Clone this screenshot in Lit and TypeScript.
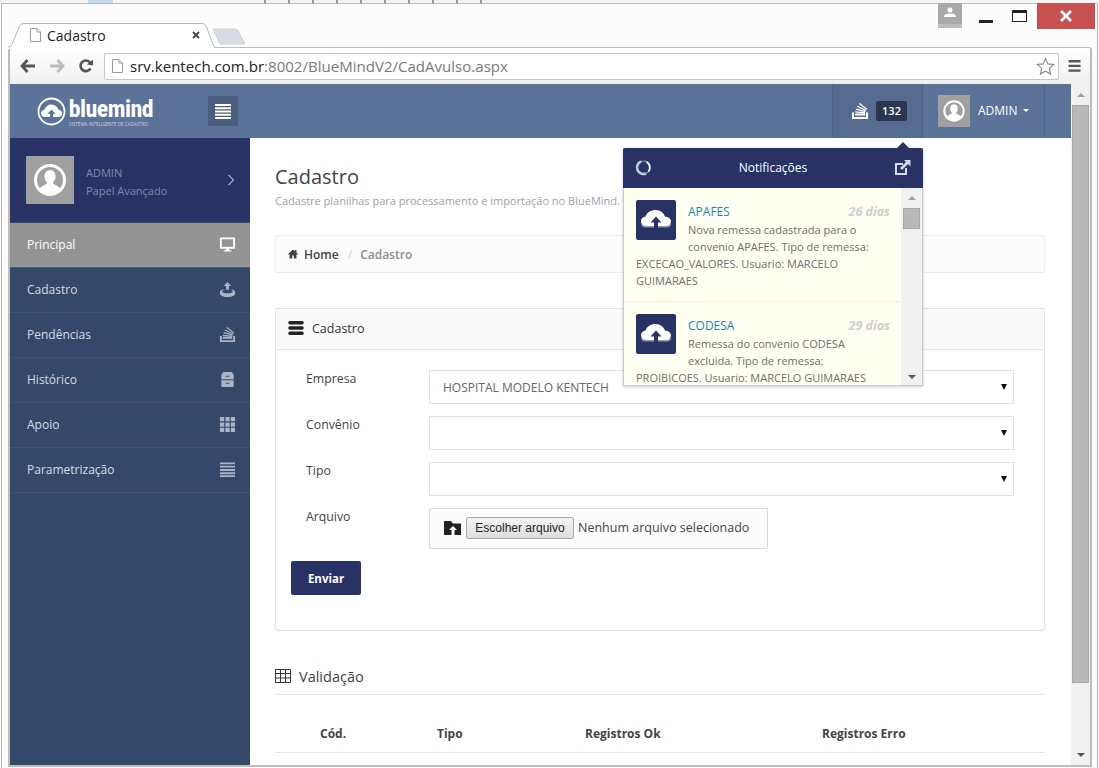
import { LitElement, html, css, svg } from "lit";
import { customElement } from "lit/decorators.js";

const avatar = (cls: string) => html`<svg class=${cls} viewBox="0 0 48 48"><rect width="48" height="48" fill="#a0a0a0"/><circle cx="24" cy="24" r="14.500" fill="none" stroke="#fff" stroke-width="3"/><ellipse cx="24" cy="20.500" rx="5.600" ry="6.600" fill="#fff"/><path d="M13 33.500C15 29.500 20.500 29.500 21.500 26h5c1 3.500 6.500 3.500 8.500 7.500A14 14 0 0 1 13 33.500z" fill="#fff"/></svg>`;

const stackIco = (cls: string) => html`<svg class=${cls} viewBox="0 0 18 18"><path d="M1 10.500h2v4.500h12v-4.500h2V17H1z" fill="currentColor"/><path d="M4 11.500h10v2H4zM4.300 9.300l9.800 .9-.2 1.300-9.800-.9zM5.200 6.400l9.400 2.600-.4 1.300-9.400-2.600zM6.600 3.600l8.600 4.300-.6 1.200-8.600-4.300zM8.700 1l7.500 5.800-.8 1-7.500-5.800z" fill="currentColor"/></svg>`;

const cloud = () => html`<svg class="cloud" viewBox="0 0 40 40"><rect width="40" height="40" rx="2" fill="#293265"/><path d="M9 27.500h22c3 0 4.500-2 4-4-1 1.500-3 2-4.500 2h-21c-1.500 0-3.500-.5-4.500-2 0 2 1.500 4 4 4z" fill="#8f95b3"/><path d="M10 26c-3 0-5-2-5-4.700 0-2.500 2-4.500 4.600-4.700C10.600 12.500 15 10 19.500 10c4.600 0 8.300 2.800 9.500 6.700 3.400 0 6 2 6 4.700 0 2.700-2 4.600-5 4.600z" fill="#fff"/><path d="M20 16.500l-5.500 6h3.500v6.500h4v-6.500h3.500z" fill="#293265"/></svg>`;

const navItems = [
  ["Cadastro", svg`<path d="M9 1l4 4.200h-2.500v4h-3v-4H5zM1 10.500l3.500-1.800v1.600L3 11c1 1.300 3.500 2 6 2s5-.7 6-2l-1.500-.7V8.700L17 10.500V14c-1 1.800-4.500 3-8 3s-7-1.200-8-3z" fill="currentColor"/>`],
  ["Pendências", null],
  ["Histórico", svg`<path d="M4.500 1h9L15.500 4v12.500l-1 .5h-11l-1-.5V4z" fill="currentColor"/><rect x="2.500" y="8.800" width="13" height="1" fill="#34496a"/><rect x="7" y="5" width="4" height="1" fill="#34496a"/><rect x="7" y="12.500" width="4" height="1" fill="#34496a"/>`],
  ["Apoio", svg`<path d="M1 1h4.500v4.500H1zM6.800 1h4.500v4.500H6.800zM12.500 1H17v4.500h-4.500zM1 6.800h4.500v4.500H1zM6.800 6.800h4.500v4.500H6.800zM12.500 6.800H17v4.500h-4.500zM1 12.500h4.500V17H1zM6.800 12.500h4.500V17H6.800zM12.500 12.500H17V17h-4.500z" fill="currentColor"/>`],
  ["Parametrização", svg`<path d="M1 1.500h16v2H1zM1 5h16v2H1zM1 8.500h16v2H1zM1 12h16v2H1zM1 15h16v2H1z" fill="currentColor"/>`],
];

@customElement("notif-item")
class NotifItem extends LitElement {
  static properties = { name: {}, age: {}, text: {} };
  name = "";
  age = "";
  text = "";
  static styles = css`
    :host { display: block; padding: 12px 11px 0 12px; height: 114px; border-bottom: 1px solid #eeeee4; overflow: hidden; font: 11px/17px "Open Sans", sans-serif; color: #6e6e6e; }
    .cloud { float: left; width: 40px; height: 40px; margin-right: 12px; }
    .head { display: flex; justify-content: space-between; height: 19px; padding-top: 2px; align-items: center; }
    .name { color: #2488a3; font-size: 12px; }
    .age { color: #cfcfcf; font-size: 12.5px; font-weight: 700; font-style: italic; }
    p { margin: 0; }
  `;
  render() {
    return html`${cloud()}<div class="head"><span class="name">${this.name}</span><span class="age">${this.age}</span></div><p>${this.text}</p>`;
  }
}

@customElement("app-root")
class AppRoot extends LitElement {
  static styles = css`
    :host { display: block; width: 1099px; height: 768px; overflow: hidden; background: #fff; font-family: "Open Sans", sans-serif; }
    * { box-sizing: border-box; }
    .strip { height: 3px; background: #f6f6f6; display: flex; padding-left: 88px; }
    .blue { width: 25px; background: #c5d9ef; }
    .ticks { width: 226px; margin-left: 151px; background: repeating-linear-gradient(90deg, #999 0 2px, transparent 2px 24px); }
    .win { margin-left: 1px; width: 1097px; height: 765px; border: 1px solid #b9b9b9; border-bottom: 0; background: #fcfcfc; display: flex; flex-direction: column; padding: 0 5px 0 6px; }

    .title { height: 43px; position: relative; flex: none; display: flex; z-index: 1; }
    .tabshape { position: absolute; left: 0; top: 0; width: 240px; height: 45px; }
    .tab { position: relative; margin: 19px 0 0 22px; width: 170px; height: 24px; display: flex; align-items: center; font: 14px "Open Sans", sans-serif; color: #222; }
    .doc { width: 11px; height: 14px; flex: none; }
    .tabtext { margin-left: 6px; flex: 1; }
    .x { width: 8px; height: 8px; }
    .ctrls { position: absolute; right: -3px; top: -1px; display: flex; align-items: flex-start; }
    .profile { width: 24px; height: 25px; background: #a9a9a9; border-bottom: 4px solid #bdbdbd; display: flex; justify-content: center; padding-top: 4px; }
    .profile svg { width: 12px; height: 11px; }
    .min { width: 14px; height: 3px; background: #222; margin: 17px 19px 0 17px; }
    .max { width: 15px; height: 12px; border: 1.5px solid #222; border-top-width: 3px; margin: 7px 10px 0 0; }
    .close { width: 58px; height: 26px; background: #c75050; display: flex; align-items: center; justify-content: center; }
    .close svg { width: 12px; height: 12px; }

    .tools { height: 37px; flex: none; display: flex; align-items: center; border: 1px solid #bdbdbd; border-width: 1px 2px 0; border-radius: 3px 3px 0 0; background: linear-gradient(#fff, #efefef); padding: 0 8px 0 10px; }
    .nav { width: 16px; height: 14px; flex: none; margin-right: 13px; }
    .rel { margin-right: 10px; }
    .url { flex: 1; height: 27px; margin: 0 9px 0 0; background: #fff; border: 1px solid #c6c6c6; border-radius: 2px; display: flex; align-items: center; padding: 0 3px 1px 7px; font: 15.05px "Open Sans", sans-serif; color: #7a7a7a; }
    .url .doc { margin-right: 7px; }
    .url b { font-weight: 400; color: #222; }
    .url span { flex: 1; }
    .star { width: 19px; height: 18px; }
    .menu { width: 13px; height: 12px; flex: none; margin-right: 1px; }

    .body { height: 681px; display: flex; border: 2px solid #bdbdbd; border-top: 0; border-bottom: 0; background: #fff; flex: none; }
    .foot { height: 2px; background: #bdbdbd; flex: none; }
    .page { width: 1061px; display: flex; flex-direction: column; position: relative; }
    .top { height: 54px; background: #5b7299; display: flex; align-items: stretch; flex: none; }
    .logo { width: 198px; display: flex; align-items: center; padding-left: 27px; gap: 3px; color: #fff; }
    .logo svg { width: 29px; height: 29px; }
    .brand { display: flex; flex-direction: column; padding-top: 3px; }
    .bname { font: 900 23px/21px "Roboto", sans-serif; display: block; transform: scaleX(.87); transform-origin: left; width: 84px; }
    .bsub { font-size: 4.600px; line-height: 6px; color: #c9d2e0; white-space: nowrap; margin-top: 1px; }
    .burger { width: 30px; height: 30px; background: #4a5e80; margin-top: 12px; display: flex; align-items: center; justify-content: center; }
    .burger svg { width: 16px; height: 15px; }
    .spacer { flex: 1; }
    .cell-n { width: 91px; border-left: 1px solid #4e638a; border-right: 1px solid #4e638a; background: #566b90; display: flex; align-items: center; padding: 0 0 1px 18px; gap: 7px; color: #fff; }
    .top-stack { width: 18px; height: 18px; }
    .badge { width: 31px; height: 20px; background: #2a3650; border-radius: 2px; color: #fff; font-size: 11px; font-weight: 600; display: flex; align-items: center; justify-content: center; }
    .cell-u { width: 122px; border-right: 1px solid #4e638a; display: flex; align-items: center; padding: 0 0 1px 15px; color: #fff; font-size: 12px; }
    .top-av { width: 32px; height: 32px; margin-right: 8px; }
    .caret { width: 0; height: 0; border: 3px solid transparent; border-top-color: #fff; border-bottom: 0; margin-left: 6px; }
    .end { width: 26px; }

    .row { flex: 1; display: flex; min-height: 0; }
    aside { width: 240px; background: #34496a; flex: none; color: #d5dbe6; font-size: 12px; }
    .who { height: 85px; background: #293265; display: flex; align-items: center; padding: 0 15px 0 16px; border-bottom: 1px solid #3d4a63; color: #8189a8; line-height: 18px; font-size: 11px; }
    .side-av { width: 48px; height: 48px; margin-right: 12px; flex: none; }
    .who div { flex: 1; padding-top: 3px; }
    .chev { width: 8px; height: 12px; color: #fff; }
    .it { height: 45px; display: flex; align-items: center; justify-content: space-between; padding: 0 14px 2px 17px; border-bottom: 1px solid #43536e; color: #d5dbe6; }
    .it svg { width: 17px; height: 17px; color: #a9b4c6; }
    .it.on { background: #939393; color: #fff; border-bottom-color: #4a5a72; }
    .it.on svg { color: #fff; }

    main { flex: 1; padding: 0 26px 0 25px; min-width: 0; overflow: hidden; color: #333; }
    h1 { margin: 27px 0 0; font: 400 20px/24px "Open Sans", sans-serif; color: #444; }
    .sub { font-size: 11px; color: #9aa4ab; line-height: 16px; margin-top: 4px; }
    .crumb { margin-top: 26px; height: 38px; border: 1px solid #ececec; border-radius: 2px; background: #fcfcfc; display: flex; align-items: center; padding-left: 12px; font-size: 12px; font-weight: 600; color: #444; }
    .crumb svg { width: 10px; height: 10px; margin-right: 6px; }
    .crumb i { font-style: normal; font-weight: 400; color: #ccc; margin: 0 8px 0 9px; }
    .crumb em { font-style: normal; color: #8d8d8d; }
    .card { margin-top: 35px; height: 323px; border: 1px solid #e2e2e2; border-radius: 2px; }
    .card-h { height: 41px; background: #fafafa; border-bottom: 1px solid #e2e2e2; display: flex; align-items: center; padding: 0 0 2px 12px; font-size: 12.5px; font-weight: 400; color: #333; }
    .card-h svg { width: 16px; height: 16px; margin-right: 8px; }
    .form { padding: 20px 30px 0 30px; display: grid; grid-template-columns: 123px 585px; row-gap: 12px; font-size: 12.3px; color: #444; }
    .lab { padding-top: 1px; line-height: 16px; font-weight: 400; }
    .sel { height: 34px; border: 1px solid #e2e2e2; display: flex; align-items: center; padding: 0 6px 0 13px; font-size: 12px; color: #666; }
    .sel::after { content: ""; margin-left: auto; border: 3.5px solid transparent; border-top: 6px solid #111; border-bottom: 0; }
    .file { width: 339px; height: 41px; border: 1px solid #d8d8d8; border-radius: 2px; background: #fcfcfc; display: flex; align-items: center; padding: 0 0 2px 14px; font: 12.5px "Open Sans", sans-serif; color: #444; }
    .file svg { width: 17px; height: 14px; margin-right: 5px; }
    .pick { font: 12px "Liberation Sans", sans-serif; height: 22px; width: 108px; border: 1px solid #a9a9a9; border-radius: 2px; background: linear-gradient(#f4f4f4, #dedede); color: #222; margin-right: 4px; padding: 0; }
    .send { display: block; margin: 12px 0 0 15px; width: 70px; height: 34px; background: #293265; color: #fff; border: 0; border-radius: 2px; font: 700 11.500px "Open Sans", sans-serif; padding: 0; }
    .val { margin-top: 34px; height: 30px; border-bottom: 1px solid #e6e6e6; display: flex; align-items: center; padding-bottom: 7px; font-size: 14.5px; color: #444; }
    .val svg { width: 16px; height: 14px; margin-right: 8px; }
    .thead { margin-top: 29px; height: 29px; border-bottom: 1px solid #e6e6e6; display: grid; grid-template-columns: 117px 148px 237px 1fr; padding-left: 45px; font-size: 12px; font-weight: 700; color: #444; line-height: 20px; }

    .scroll { width: 19px; flex: none; background: #f1f1f1; display: flex; flex-direction: column; align-items: center; }
    .arr { height: 21px; flex: none; display: flex; align-items: center; justify-content: center; }
    .arr::after { content: ""; border: 4px solid transparent; border-top: 0; border-bottom: 4px solid #555; }
    .arr.up::after { border-bottom-color: #a3a3a3; }
    .arr.dn::after { border-bottom: 0; border-top: 4px solid #555; }
    .thumb { width: 17px; height: 578px; background: #b8b8b8; border: 1px solid #a8a8a8; flex: none; }
    .gap { flex: 1; }

    .pop { position: absolute; left: 613px; top: 64px; width: 300px; height: 238px; background: #fffff2; border: 1px solid #c9c9c9; box-shadow: 0 1px 3px rgba(0,0,0,.2); border-top: 0; display: flex; flex-direction: column; }
    .pop::before { content: ""; position: absolute; right: 13px; top: -6px; border: 6px solid transparent; border-top: 0; border-bottom: 6px solid #2a3650; }
    .pop-h { margin: 0 -1px; height: 40px; flex: none; background: #293265; color: #fff; border-radius: 2px 2px 0 0; display: flex; align-items: center; padding: 0 12px 1px; font-size: 12px; font-weight: 400; justify-content: space-between; }
    .pop-h svg { width: 17px; height: 17px; }
    .pop-b { flex: 1; display: flex; min-height: 0; }
    .list { flex: 1; overflow: hidden; min-width: 0; }
    .bar { width: 21px; background: #f1f1f1; flex: none; display: flex; flex-direction: column; align-items: center; }
    .bar .arr { height: 20px; }
    .bar .thumb { height: 21px; width: 17px; }
    .bar .arr.dn { height: 17px; }
  `;

  render() {
    const doc = html`<svg class="doc" viewBox="0 0 11 14"><path d="M.5.5h6.500l3.500 3.500v9.500h-10z" fill="#fff" stroke="#9a9a9a"/><path d="M7 .5V4h3.500" fill="#eee" stroke="#9a9a9a"/></svg>`;
    return html`
      <div class="strip"><div class="blue"></div><div class="ticks"></div></div>
      <div class="win">
        <div class="title">
          <svg class="tabshape" viewBox="0 0 240 45">
            <path d="M205 25H226C229 25 230 26 231 29L237 40H212z" fill="#d8dde4" stroke="#ccd0d6"/>
            <path d="M0 45V43C3 43 4 41 5 38L11 23C12 20.500 14 19.500 17 19.500H194C196.500 19.500 197.500 21 198.500 23L206 43V45z" fill="#fff"/>
            <path d="M0 43C3 43 4 41 5 38L11 23C12 20.500 14 19.500 17 19.500H194C196.500 19.500 197.500 21 198.500 23L206 43" fill="none" stroke="#b5b5b5"/>
          </svg>
          <div class="tab">${doc}<span class="tabtext">Cadastro</span>
            <svg class="x" viewBox="0 0 8 8"><path d="M1 1l6 6M7 1l-6 6" stroke="#444" stroke-width="1.800"/></svg>
          </div>
          <div class="ctrls">
            <div class="profile"><svg viewBox="0 0 12 11"><circle cx="6" cy="3" r="2.500" fill="#fff"/><path d="M0 10c0-3 3-3.500 6-3.500s6 .5 6 3.500z" fill="#fff"/></svg></div>
            <div class="min"></div>
            <div class="max"></div>
            <div class="close"><svg viewBox="0 0 12 12"><path d="M1 1l10 10M11 1L1 11" stroke="#fff" stroke-width="2.800"/></svg></div>
          </div>
        </div>
        <div class="tools">
          <svg class="nav" viewBox="0 0 16 14"><path d="M7.500 1L2 7l5.500 6M2.500 7H15" fill="none" stroke="#555" stroke-width="2.800"/></svg>
          <svg class="nav" viewBox="0 0 16 14"><path d="M8.500 1L14 7l-5.500 6M13.500 7H1" fill="none" stroke="#bbb" stroke-width="2.800"/></svg>
          <svg class="nav rel" viewBox="0 0 16 14"><path d="M12.500 9.500A5.300 5.300 0 1 1 12 3.500" fill="none" stroke="#555" stroke-width="2.600"/><path d="M9 5.500L15 .5v6z" fill="#555"/></svg>
          <div class="url">${doc}<span><b>srv.kentech.com.br</b>:8002/BlueMindV2/CadAvulso.aspx</span>
            <svg class="star" viewBox="0 0 19 18"><path d="M9.500 1.500l2.400 5.400 5.800.6-4.300 3.900 1.200 5.700-5.100-2.900-5.100 2.900 1.200-5.700L1.300 7.500l5.800-.6z" fill="#fff" stroke="#888" stroke-width="1.100"/></svg>
          </div>
          <svg class="menu" viewBox="0 0 13 12"><path d="M.5 0h12v2.400H.5zM.5 4.700h12v2.400H.5zM.5 9.400h12v2.400H.5z" fill="#555"/></svg>
        </div>
        <div class="body">
          <div class="page">
            <header class="top">
              <div class="logo">
                <svg viewBox="0 0 29 29"><circle cx="14.500" cy="14.500" r="13" fill="none" stroke="#fff" stroke-width="1.800"/><path d="M8 20c-2.300 0-4-1.500-4-3.600 0-2 1.500-3.400 3.600-3.600C8.400 9.500 11.300 7.500 14.500 7.500c3.300 0 6 2.100 6.900 5.200 2.300.1 3.800 1.700 3.800 3.700 0 2.100-1.700 3.600-4 3.600z" fill="#fff"/><path d="M14.500 12.500l-4 4.300h2.500v5.500h3v-5.500h2.500z" fill="#5b7299"/></svg>
                <div class="brand"><span class="bname">bluemind</span><span class="bsub">SISTEMA INTELIGENTE DE CADASTRO</span></div>
              </div>
              <div class="burger"><svg viewBox="0 0 16 15"><path d="M0 0h16v2H0zM0 3.250h16v2H0zM0 6.500h16v2H0zM0 9.750h16v2H0zM0 13h16v2H0z" fill="#fff"/></svg></div>
              <div class="spacer"></div>
              <div class="cell-n">${stackIco("top-stack")}<span class="badge">132</span></div>
              <div class="cell-u">${avatar("top-av")}ADMIN<span class="caret"></span></div>
              <div class="end"></div>
            </header>
            <div class="row">
              <aside>
                <div class="who">${avatar("side-av")}<div>ADMIN<br />Papel Avançado</div>
                  <svg class="chev" viewBox="0 0 8 12"><path d="M1.500 1l5 5-5 5" fill="none" stroke="currentColor"/></svg>
                </div>
                <div class="it on">Principal<svg viewBox="0 0 18 18"><path d="M1 1.500h16v12H1zM3 3.500v8h12v-8zM7.500 13.500h3v1.500h2.500v1.500H5V15h2.500z" fill="currentColor" fill-rule="evenodd"/></svg></div>
                ${navItems.map(([n, ic]) => html`<div class="it">${n}${ic ? html`<svg viewBox="0 0 18 18">${ic}</svg>` : stackIco("")}</div>`)}
              </aside>
              <main>
                <h1>Cadastro</h1>
                <div class="sub">Cadastre planilhas para processamento e importação no BlueMind.</div>
                <nav class="crumb"><svg viewBox="0 0 10 10"><path d="M5 .5L0 5l.6.700L1.500 5v4.500h2.700V6.500h1.600v3h2.700V5l.9.700L10 5 8.500 3.700V1H7v1.300z" fill="#444"/></svg>Home<i>/</i><em>Cadastro</em></nav>
                <section class="card">
                  <div class="card-h"><svg viewBox="0 0 16 16"><path d="M2 1h12a1.800 1.800 0 0 1 0 3.600H2A1.800 1.800 0 0 1 2 1zM2 6.200h12a1.800 1.800 0 0 1 0 3.600H2a1.800 1.800 0 0 1 0-3.600zM2 11.400h12a1.800 1.800 0 0 1 0 3.600H2a1.800 1.800 0 0 1 0-3.600z" fill="#222"/></svg>Cadastro</div>
                  <div class="form">
                    <div class="lab">Empresa</div><div class="sel">HOSPITAL MODELO KENTECH</div>
                    <div class="lab">Convênio</div><div class="sel"></div>
                    <div class="lab">Tipo</div><div class="sel"></div>
                    <div class="lab">Arquivo</div>
                    <div class="file"><svg viewBox="0 0 17 14"><path d="M0 0h7l2 2.500h8V14H0z" fill="#222"/><path d="M9 5l-4 4h2.500v5h3V9H13z" fill="#fff"/></svg><button class="pick">Escolher arquivo</button>Nenhum arquivo selecionado</div>
                  </div>
                  <button class="send">Enviar</button>
                </section>
                <div class="val"><svg viewBox="0 0 16 14"><path d="M.5.5h15v13H.5zM.5 4.500h15M.5 9h15M5.500.5v13M10.500.5v13" fill="none" stroke="#333"/></svg>Validação</div>
                <div class="thead"><span>Cód.</span><span>Tipo</span><span>Registros Ok</span><span>Registros Erro</span></div>
              </main>
            </div>
            <div class="pop">
              <div class="pop-h">
                <svg viewBox="0 0 17 17"><circle cx="8.500" cy="8.500" r="6.500" fill="none" stroke="#8f95b3" stroke-width="1.200"/><path d="M6 2.500A6.500 6.500 0 0 0 11 14.500" fill="none" stroke="#c3c9d6" stroke-width="2.600"/><path d="M11.500 2.800A6.500 6.500 0 0 1 13.500 12.500" fill="none" stroke="#eef0f5" stroke-width="2"/></svg>
                <span>Notificações</span>
                <svg viewBox="0 0 17 17"><path d="M1 4h8v2H3v8h8v-5h2v7H1z" fill="#d8dce6"/><path d="M10 1h6.500v6.500L14 5l-6 6-2-2 6-6z" fill="#d8dce6"/></svg>
              </div>
              <div class="pop-b">
                <div class="list">
                  <notif-item name="APAFES" age="26 dias" text="Nova remessa cadastrada para o convenio APAFES. Tipo de remessa: EXCECAO_VALORES. Usuario: MARCELO GUIMARAES"></notif-item>
                  <notif-item name="CODESA" age="29 dias" text="Remessa do convenio CODESA excluida. Tipo de remessa: PROIBICOES. Usuario: MARCELO GUIMARAES"></notif-item>
                </div>
                <div class="bar"><div class="arr up"></div><div class="thumb"></div><div class="gap"></div><div class="arr dn"></div></div>
              </div>
            </div>
          </div>
          <div class="scroll"><div class="arr up"></div><div class="thumb"></div><div class="gap"></div><div class="arr dn"></div></div>
        </div>
        <div class="foot"></div>
      </div>`;
  }
}
